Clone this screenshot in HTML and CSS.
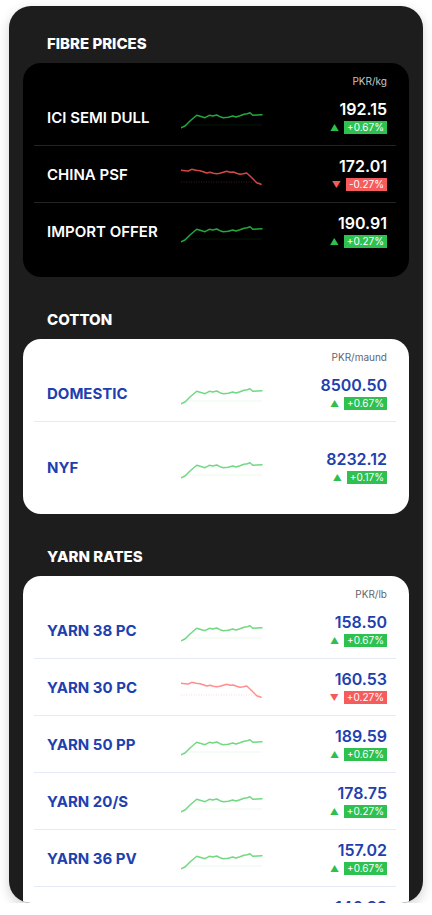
FILE: index.html
```html
<!DOCTYPE html>
<html lang="en">
<head>
    <meta charset="UTF-8">
    <meta name="viewport" content="width=device-width, initial-scale=1.0">
    <title>Market Rates</title>
    <link rel="stylesheet" href="styles.css">
</head>
<body>
    <svg class="defs" xmlns="http://www.w3.org/2000/svg">
        <symbol id="spark-up" viewBox="0 0 82 18">
            <line x1="2" y1="14" x2="81" y2="14" stroke="currentColor" stroke-opacity=".15" stroke-width="1"/>
            <polyline fill="none" stroke="currentColor" stroke-width="1.5" stroke-linejoin="round" stroke-linecap="round"
                points="0,16.7 4,15 9,10 15.7,4.3 20.7,5.7 24,6.7 28.3,4.3 31.7,5 35.7,4 39,5.7 42.3,6.7 47.3,6.3 51.7,5 55,6 59,4.7 63,3.3 66.3,2.7 69,1.7 71.7,4.3 76.3,4 81,3.7"/>
        </symbol>
        <symbol id="spark-down" viewBox="0 0 82 18">
            <line x1="0" y1="14" x2="80" y2="14" stroke="currentColor" stroke-opacity=".35" stroke-width="1" stroke-dasharray="1 1.5"/>
            <polyline fill="none" stroke="currentColor" stroke-width="1.5" stroke-linejoin="round" stroke-linecap="round"
                points="0,2.3 4,2.7 7.3,3 10.7,1.3 15,2.3 19,2.7 22.3,3.7 25.7,5 29,4.3 32.3,5.3 35.7,5.7 39,5.3 42.3,4.3 45.7,3.3 49,4.3 52.3,4 55.7,5.3 59,6.3 62.3,5.7 65.7,5 69,8 72.3,11.3 75.7,14.7 80,16.3"/>
        </symbol>
    </svg>

    <div class="phone">
        <!-- fibre -->
        <section class="section">
            <h2>FIBRE PRICES</h2>
            <div class="card dark">
                <div class="unit">PKR/kg</div>
                <div class="row">
                    <span class="name">ICI SEMI DULL</span>
                    <svg class="spark up"><use href="#spark-up"/></svg>
                    <div class="quote">
                        <span class="price">192.15</span>
                        <span class="change up"><i>▲</i><b>+0.67%</b></span>
                    </div>
                </div>
                <div class="row">
                    <span class="name">CHINA PSF</span>
                    <svg class="spark down"><use href="#spark-down"/></svg>
                    <div class="quote">
                        <span class="price">172.01</span>
                        <span class="change down"><i>▼</i><b>-0.27%</b></span>
                    </div>
                </div>
                <div class="row">
                    <span class="name">IMPORT OFFER</span>
                    <svg class="spark up"><use href="#spark-up"/></svg>
                    <div class="quote">
                        <span class="price">190.91</span>
                        <span class="change up"><i>▲</i><b>+0.27%</b></span>
                    </div>
                </div>
            </div>
        </section>

        <!-- cotton -->
        <section class="section">
            <h2>COTTON</h2>
            <div class="card">
                <div class="unit">PKR/maund</div>
                <div class="row">
                    <span class="name">DOMESTIC</span>
                    <svg class="spark up"><use href="#spark-up"/></svg>
                    <div class="quote">
                        <span class="price">8500.50</span>
                        <span class="change up"><i>▲</i><b>+0.67%</b></span>
                    </div>
                </div>
                <div class="row tall">
                    <span class="name">NYF</span>
                    <svg class="spark up"><use href="#spark-up"/></svg>
                    <div class="quote">
                        <span class="price">8232.12</span>
                        <span class="change up"><i>▲</i><b>+0.17%</b></span>
                    </div>
                </div>
            </div>
        </section>

        <!-- yarn -->
        <section class="section">
            <h2>YARN RATES</h2>
            <div class="card">
                <div class="unit">PKR/lb</div>
                <div class="row">
                    <span class="name">YARN 38 PC</span>
                    <svg class="spark up"><use href="#spark-up"/></svg>
                    <div class="quote">
                        <span class="price">158.50</span>
                        <span class="change up"><i>▲</i><b>+0.67%</b></span>
                    </div>
                </div>
                <div class="row">
                    <span class="name">YARN 30 PC</span>
                    <svg class="spark down"><use href="#spark-down"/></svg>
                    <div class="quote">
                        <span class="price">160.53</span>
                        <span class="change down"><i>▼</i><b>+0.27%</b></span>
                    </div>
                </div>
                <div class="row">
                    <span class="name">YARN 50 PP</span>
                    <svg class="spark up"><use href="#spark-up"/></svg>
                    <div class="quote">
                        <span class="price">189.59</span>
                        <span class="change up"><i>▲</i><b>+0.67%</b></span>
                    </div>
                </div>
                <div class="row">
                    <span class="name">YARN 20/S</span>
                    <svg class="spark up"><use href="#spark-up"/></svg>
                    <div class="quote">
                        <span class="price">178.75</span>
                        <span class="change up"><i>▲</i><b>+0.27%</b></span>
                    </div>
                </div>
                <div class="row">
                    <span class="name">YARN 36 PV</span>
                    <svg class="spark up"><use href="#spark-up"/></svg>
                    <div class="quote">
                        <span class="price">157.02</span>
                        <span class="change up"><i>▲</i><b>+0.67%</b></span>
                    </div>
                </div>
                <div class="row">
                    <span class="name">YARN 40 PC</span>
                    <svg class="spark up"><use href="#spark-up"/></svg>
                    <div class="quote">
                        <span class="price">146.82</span>
                        <span class="change up"><i>▲</i><b>+0.17%</b></span>
                    </div>
                </div>
            </div>
        </section>
    </div>
</body>
</html>
```

FILE: styles.css
```css
body {
    margin: 0;
    background: #fff;
    font-family: Inter, "Noto Sans", Arial, sans-serif;
}
.defs {
    display: none;
}
.phone {
    margin: 6px 9px 0;
    height: 897px;
    padding: 0 14px;
    background: #1d1d1d;
    border-radius: 22px;
    overflow: hidden;
    box-shadow: 0 4px 12px rgba(0, 0, 0, 0.18);
}
.section {
    padding-top: 34px;
}
.section:first-child {
    padding-top: 29px;
}
.section h2 {
    margin: 0 0 10px;
    padding-left: 24px;
    font-size: 15px;
    line-height: 18px;
    font-weight: 800;
    color: #fff;
}
.card {
    background: #fff;
    border-radius: 18px;
    padding: 12px 13px 14px 11px;
}
.unit {
    padding-right: 9px;
    text-align: right;
    font-size: 10px;
    line-height: 12px;
    color: #5f6570;
    margin-bottom: 2px;
}
.row {
    display: grid;
    grid-template-columns: 134px 82px 1fr;
    align-items: center;
    min-height: 56px;
    padding: 0 9px 0 13px;
    border-bottom: 1px solid #e4eaf8;
}
.row:last-child {
    border-bottom: none;
}
.row.tall {
    min-height: 66px;
    padding-top: 12px;
}
.name {
    font-size: 15px;
    font-weight: 700;
    color: #1e40af;
    white-space: nowrap;
}
.spark {
    width: 82px;
    height: 18px;
    margin-top: 6px;
}
.spark.up {
    color: #72d982;
}
.spark.down {
    color: #ff8f8f;
}
.quote {
    display: flex;
    flex-direction: column;
    align-items: flex-end;
}
.price {
    font-size: 16px;
    line-height: 19px;
    font-weight: 600;
    color: #1e40af;
}
.change {
    display: flex;
    align-items: center;
    gap: 5px;
    margin-top: 2px;
}
.change i {
    font-style: normal;
    font-size: 9px;
}
.change b {
    font-weight: 400;
    font-size: 10px;
    line-height: 13px;
    padding: 0 3px;
    color: #fff;
}
.change.up i {
    color: #2fbf4e;
}
.change.up b {
    background: #2fc150;
}
.change.down i {
    color: #f55a5a;
}
.change.down b {
    background: #f75c5c;
}

/* dark card */
.card.dark {
    background: #000;
    padding-bottom: 18px;
}
.card.dark .unit {
    color: #c8c8c8;
}
.card.dark .row {
    border-bottom-color: #242424;
}
.card.dark .row:last-child {
    border-bottom: none;
}
.card.dark .name,
.card.dark .price {
    color: #fff;
    font-weight: 600;
}
.card.dark .spark.up {
    color: #22a83c;
}
.card.dark .spark.down {
    color: #d24848;
}
```
